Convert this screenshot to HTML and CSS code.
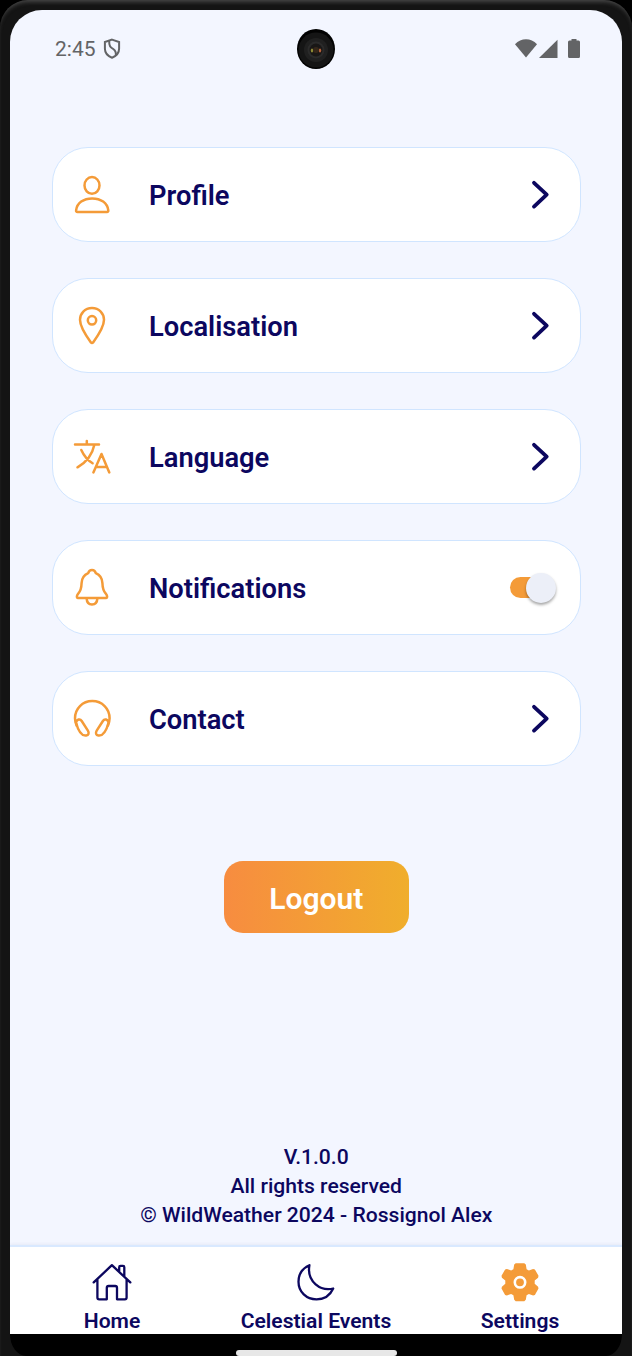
FILE: index.html
```html
<!DOCTYPE html>
<html lang="en">
<head>
<meta charset="utf-8">
<title>Settings</title>
<link rel="stylesheet" href="styles.css">
</head>
<body>
<div class="phone">
  <div class="screen">
    <header class="status">
      <span class="time">2:45</span>
      <svg class="shield" viewBox="0 0 18 22"><path d="M9 1.600 16.100 4v6.500c0 4.200-2.700 7.500-7.100 9.200C4.600 18 1.900 14.700 1.900 10.500V4z"/><path d="M6.200 3C6 9 8 9.500 10.200 11s3 3 2.600 6"/></svg>
      <svg class="camera" viewBox="0 0 40 40"><ellipse cx="20" cy="20" rx="19" ry="20" fill="#020202"/><ellipse cx="20" cy="21" rx="17.5" ry="17.5" fill="#151515"/><circle cx="20" cy="21" r="12" fill="#202020"/><circle cx="20" cy="21" r="8.500" fill="#2b2b2b"/><circle cx="20" cy="21" r="6.500" fill="#191716"/><ellipse cx="16" cy="21.500" rx="1.200" ry="2" fill="#8d8b35"/><ellipse cx="24" cy="21.500" rx="1.200" ry="2" fill="#b5613a"/><circle cx="20" cy="21" r="3" fill="#352719"/></svg>
      <svg class="signals" viewBox="0 0 66 20"><path d="M0 5.200C6-1.400 16-1.400 22 5.200L11 18.600z"/><path d="M24 19 42.500 .7V19z"/><path d="M56.500 0h5v1.500h2q1.500 0 1.500 1.500v14.500q0 1.500-1.500 1.500h-9q-1.500 0-1.500-1.500V3q0-1.500 1.500-1.500h2z"/></svg>
    </header>

    <main class="content">
      <section class="list">
        <div class="card">
          <svg class="icon" viewBox="0 0 40 40"><ellipse cx="20" cy="10.400" rx="7.500" ry="8.400"/><path d="M5.400 36.900C4.400 36.900 4 36.300 4.100 35.300 5 28 11.500 23.400 20.200 23.400S35.400 28 36.300 35.300C36.400 36.300 36 36.900 35 36.900z"/></svg>
          <span class="label">Profile</span>
          <svg class="chevron" viewBox="0 0 20 30"><path d="M4 2.800 16.700 14.700 4 26.600"/></svg>
        </div>
        <div class="card">
          <svg class="icon" viewBox="0 0 40 40"><path d="M20 2.100C12.800 2.100 8 7.300 8 13.800 8 20.500 13.500 29 18.900 36.400Q20 37.700 21.100 36.400C26.500 29 32 20.500 32 13.800 32 7.300 27.200 2.100 20 2.100z"/><circle cx="20" cy="14.300" r="4.200"/></svg>
          <span class="label">Localisation</span>
          <svg class="chevron" viewBox="0 0 20 30"><path d="M4 2.800 16.700 14.700 4 26.600"/></svg>
        </div>
        <div class="card">
          <svg class="icon" viewBox="0 0 40 40"><path d="M3 7.600H27M14.800 4V7.600M22.300 8C20 19 14 25.500 5.500 30.300M9.300 13C12 19 16 23.500 20.600 26.300M21.400 35.400 29.500 17 37.300 35.400M24.200 30H34.800"/></svg>
          <span class="label">Language</span>
          <svg class="chevron" viewBox="0 0 20 30"><path d="M4 2.800 16.700 14.700 4 26.600"/></svg>
        </div>
        <div class="card">
          <svg class="icon" viewBox="0 0 40 40"><path d="M20 2.100c-2 0-3.200 1.100-3.800 3C12.200 6.800 9.800 10 9.600 15c-.2 6-1 8-3.200 10.300-1.500 1.600-2.300 4.700-.4 4.700H34c1.900 0 1.100-3.100-.4-4.700C31.400 23 30.600 21 30.400 15 30.200 10 27.800 6.800 23.800 5.100 23.200 3.200 22 2.100 20 2.100z"/><path d="M14.600 30.200c.2 4 2.200 6.300 5.400 6.300s5.200-2.300 5.400-6.300"/></svg>
          <span class="label">Notifications</span>
          <span class="toggle"><span class="thumb"></span></span>
        </div>
        <div class="card">
          <svg class="icon" viewBox="0 0 40 40"><path d="M4.600 26.500C3.500 23.500 3 21.500 3 19.300 3 9.500 10.500 2.100 20.300 2.100S37.600 9.500 37.600 19.300c0 2.200-.5 4.200-1.600 7.200"/><path d="M4 23.500c.8-3.200 4-4.200 5.700-1.500l6.200 9.600c1.500 2.400.7 4.500-1.700 4.900C8.600 37.300 6 31 4 23.500zM36.600 23.500c-.8-3.200-4-4.200-5.700-1.500l-6.200 9.600c-1.500 2.400-.7 4.500 1.700 4.900C32 37.300 34.600 31 36.600 23.500z"/></svg>
          <span class="label">Contact</span>
          <svg class="chevron" viewBox="0 0 20 30"><path d="M4 2.800 16.700 14.700 4 26.600"/></svg>
        </div>
      </section>

      <button class="logout">Logout</button>

      <footer class="about">
        <p>V.1.0.0</p>
        <p>All rights reserved</p>
        <p>© WildWeather 2024 - Rossignol Alex</p>
      </footer>
    </main>

    <nav class="tabs">
      <a class="tab"><svg class="tab-icon" viewBox="0 0 40 40"><path d="M1.700 20.400 19.900 3.200 38.300 20.400M5.400 17.200V35.500Q5.400 37.300 7.200 37.300H14.800V25.800Q14.800 24 16.600 24H23.200Q25 24 25 25.800V37.300H32.800Q34.600 37.300 34.600 35.500V17.200M27.200 9.800V5.200Q27.200 3.900 28.500 3.900H31Q32.300 3.900 32.300 5.200V14.600"/></svg><span>Home</span></a>
      <a class="tab"><svg class="tab-icon" viewBox="0 0 40 40"><path d="M13.400 3.200C6 6.500 2.500 12.600 2.500 19.700 2.500 30 10.500 37.300 20.500 37.300 28.300 37.300 34.300 33 37.200 26.500 25 29.500 10.500 20 13.400 3.200z"/></svg><span>Celestial Events</span></a>
      <a class="tab"><svg class="tab-icon gear" viewBox="0 0 40 40"><path d="M15.700 1.200h8.600l1.500 1.400.8 4.600 2.300 1.300 4.200-1.600 1.800.6 3.600 6.300-.4 1.900-3.400 2.900v3.200l3.400 2.900.4 1.900-3.600 6.300-1.800.6-4.200-1.600-2.300 1.300-.8 4.600-1.500 1.400h-8.600l-1.500-1.400-.8-4.600-2.300-1.300-4.200 1.600-1.800-.6-3.600-6.300.4-1.900 3.400-2.900v-3.200l-3.400-2.900-.4-1.900 3.600-6.300 1.800-.6 4.200 1.600 2.300-1.300.8-4.600z"/><circle cx="20" cy="20.300" r="5.200"/></svg><span>Settings</span></a>
    </nav>
  </div>
  <div class="system"><span class="handle"></span></div>
</div>
</body>
</html>
```

FILE: styles.css
```css
* { box-sizing: border-box; }
body { margin: 0; background: #000; font-family: Roboto, sans-serif; color: #0c075f; }
.phone {
  width: 632px; height: 1356px; padding: 10px 10px 0; overflow: hidden;
  display: flex; flex-direction: column;
  background: #141414; border-radius: 28px 28px 0 0;
  box-shadow: inset 0 4px 4px -2px #484848;
}
.screen {
  height: 1324px; display: flex; flex-direction: column; overflow: hidden;
  background: #f3f6ff; border-radius: 32px 32px 0 0;
}
.status { height: 78px; padding: 0 41px 0 45px; display: flex; align-items: center; color: #636466; }
.time { width: 41px; font-size: 21px; white-space: nowrap; }
.shield { width: 18px; height: 22px; margin-left: 7px; fill: none; stroke: #636466; stroke-width: 2; }
.camera { width: 40px; height: 40px; margin-left: 175px; }
.signals { width: 66px; height: 20px; margin-left: auto; fill: #636466; }

.content { flex: 1; padding: 59px 41.500px 0 42px; display: flex; flex-direction: column; align-items: center; }
.list { width: 100%; display: flex; flex-direction: column; gap: 36px; }
.card {
  height: 95px; padding: 0 20px 0 19px; display: flex; align-items: center;
  background: #fff; border: 1.500px solid #d0e5ff; border-radius: 36px;
}
.icon { width: 40px; height: 40px; fill: none; stroke: #f49b38; stroke-width: 2.500; stroke-linecap: round; stroke-linejoin: round; }
.label { flex: 1; margin-left: 37px; padding-top: 3px; font-size: 27.300px; line-height: 32px; font-weight: 600; }
.chevron { width: 20px; height: 30px; margin-right: 10px; fill: none; stroke: #0c075f; stroke-width: 3.800; stroke-linecap: round; stroke-linejoin: round; }
.toggle { width: 46px; height: 21px; margin-right: 4px; display: flex; align-items: center; justify-content: flex-end; border-radius: 11px; background: linear-gradient(90deg, #f49b38 30px, transparent 30px); }
.thumb { width: 30px; height: 30px; flex: none; border-radius: 50%; background: #eceff8; box-shadow: 0 2px 3px rgba(0,0,0,.35); }
.logout {
  width: 185px; height: 72px; margin-top: 95px; padding: 3px 0 0; border: 0; border-radius: 19px;
  background: linear-gradient(90deg, #f78c40, #f0ae2c); color: #fff;
  font: 600 30px/36px Roboto, sans-serif;
}
.about { margin-top: auto; padding-bottom: 16px; font-size: 21.100px; line-height: 29px; font-weight: 500; text-align: center; white-space: nowrap; }
.about p { margin: 0; }
.tabs { height: 89px; display: grid; grid-template-columns: repeat(3, 1fr); background: #fff; border-top: 2px solid #d9e9ff; box-shadow: 0 -1px 3px rgba(60,70,130,.07); }
.tab { display: flex; flex-direction: column; align-items: center; padding-top: 15px; font-size: 21.100px; line-height: 24px; font-weight: 600; white-space: nowrap; }
.tab-icon { width: 40px; height: 40px; margin-bottom: 7px; flex: none; fill: none; stroke: #0c075f; stroke-width: 2.300; stroke-linecap: round; stroke-linejoin: round; }
.gear { fill: #f49b38; stroke: none; }
.gear circle { stroke: #fff; stroke-width: 2.600; }
.system { height: 22px; background: #000; display: flex; justify-content: center; padding-top: 15.500px; border-bottom-left-radius: 22px 30px; border-bottom-right-radius: 22px 30px; }
.handle { width: 161px; height: 6px; border-radius: 3px; background: #e7e7e7; }
```
